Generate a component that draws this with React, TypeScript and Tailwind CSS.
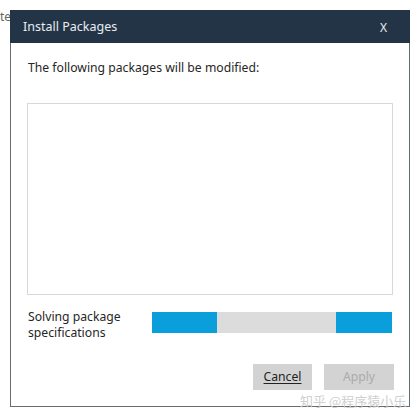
import React from "react";

export default function App() {
  return (
    <div
      className="relative w-[420px] h-[417px] bg-white pl-[10px] pt-[10px] overflow-hidden"
      style={{ fontFamily: '"Noto Sans", "Open Sans", sans-serif' }}
    >
      <span className="absolute left-[0px] top-[9px] text-[12px] leading-[16px] text-[#666]">te</span>
      <div className="relative w-[400px] h-[397px] flex flex-col bg-white">
        <div className="h-[33px] bg-[#243447] flex items-center justify-between pl-[13px] pr-[23px] text-[#e8edf1] text-[12.5px] pt-[2px]">
          <span>Install Packages</span>
          <span className="text-[12px]">X</span>
        </div>
        <div className="flex-1 flex flex-col border-x border-b border-[#646d72] pl-[16px] pr-[15px]">
          <div className="mt-[16px] text-[12.2px] leading-[18px] text-[#262626] pl-[1px]">
            The following packages will be modified:
          </div>
          <div className="mt-[26px] h-[192px] w-[366px] border border-[#d8d8d8] bg-white" />
          <div className="mt-[14px] flex items-start">
            <div className="w-[125px] text-[12.2px] leading-[16px] text-[#262626] pl-[1px]">
              Solving package
              <br />
              specifications
            </div>
            <div className="mt-[3px] w-[240px] h-[21px] bg-[#dcdcdc] flex justify-between">
              <div className="w-[65px] h-full bg-[#0a9fdb]" />
              <div className="w-[56px] h-full bg-[#0a9fdb]" />
            </div>
          </div>
          <div className="mt-[23px] flex justify-end gap-[12px]">
            <button className="w-[59px] h-[26px] bg-[#d3d3d3] text-[12.2px] text-[#222] underline underline-offset-2">
              Cancel
            </button>
            <button className="w-[70px] h-[26px] bg-[#d3d3d3] text-[12.2px] text-[#ababab]">
              Apply
            </button>
          </div>
        </div>
      </div>
      <span
        className="absolute left-[300px] top-[391px] text-[13px] text-[#cfcfcf] whitespace-nowrap"
        style={{ fontFamily: '"Noto Sans CJK SC", sans-serif' }}
      >
        知乎 @程序猿小乐
      </span>
    </div>
  );
}
